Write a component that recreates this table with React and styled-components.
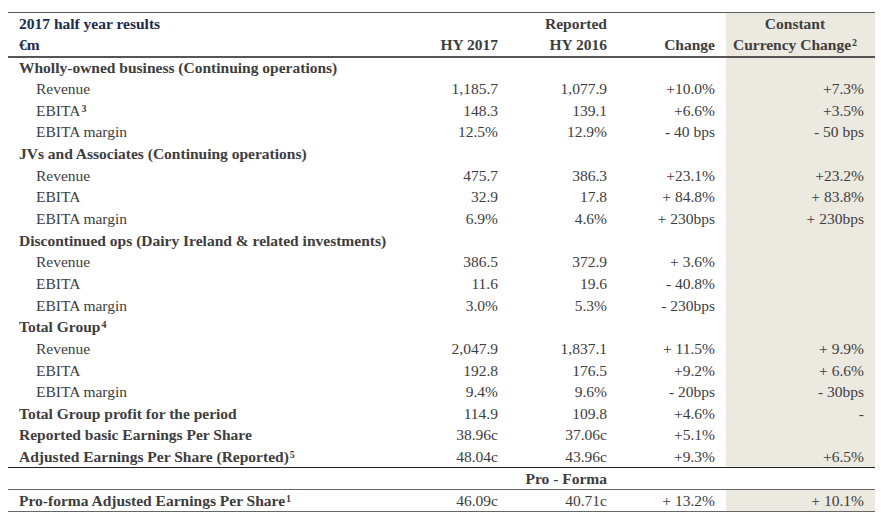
import React from 'react';
import styled, { createGlobalStyle } from 'styled-components';

const GlobalStyle = createGlobalStyle`
    html, body {
        margin: 0;
        padding: 0;
        background: #ffffff;
    }
`;

const Page = styled.div`
    width: 881px;
    height: 522px;
    padding: 12px 6px 0 8px;
    box-sizing: border-box;
    font-family: "Liberation Serif", "Times New Roman", serif;
    font-size: 15.5px;
    color: #3d3d3d;
`;

const Table = styled.table`
    width: 867px;
    border-collapse: collapse;
    table-layout: fixed;
`;

const Row = styled.tr`
    height: ${(p) => p.$h || 21.65}px;
    border-top: ${(p) => p.$top || 'none'};
    border-bottom: ${(p) => p.$bottom || 'none'};
`;

const Cell = styled.td`
    padding: 0 11px 0 ${(p) => (p.$indent ? 28 : p.$left ? 11 : 0)}px;
    text-align: ${(p) => (p.$align || 'right')};
    font-weight: ${(p) => (p.$bold ? 700 : 400)};
    white-space: nowrap;
    line-height: 1;
    vertical-align: middle;
    background: ${(p) => (p.$shade ? '#ece9e0' : 'transparent')};
    color: ${(p) => (p.$title ? '#1d2b4c' : 'inherit')};
`;

const Sup = styled.sup`
    font-size: 10px;
    font-weight: 700;
    vertical-align: 4px;
    line-height: 0;
    margin-left: 1px;
`;

const rows = [
    { label: 'Wholly-owned business (Continuing operations)', head: true },
    { label: 'Revenue', v: ['1,185.7', '1,077.9', '+10.0%', '+7.3%'] },
    { label: 'EBITA', sup: '3', v: ['148.3', '139.1', '+6.6%', '+3.5%'] },
    { label: 'EBITA margin', v: ['12.5%', '12.9%', '- 40 bps', '- 50 bps'] },
    { label: 'JVs and Associates (Continuing operations)', head: true },
    { label: 'Revenue', v: ['475.7', '386.3', '+23.1%', '+23.2%'] },
    { label: 'EBITA', v: ['32.9', '17.8', '+ 84.8%', '+ 83.8%'] },
    { label: 'EBITA margin', v: ['6.9%', '4.6%', '+ 230bps', '+ 230bps'] },
    { label: 'Discontinued ops (Dairy Ireland & related investments)', head: true },
    { label: 'Revenue', v: ['386.5', '372.9', '+ 3.6%', ''] },
    { label: 'EBITA', v: ['11.6', '19.6', '- 40.8%', ''] },
    { label: 'EBITA margin', v: ['3.0%', '5.3%', '- 230bps', ''] },
    { label: 'Total Group', sup: '4', head: true },
    { label: 'Revenue', v: ['2,047.9', '1,837.1', '+ 11.5%', '+ 9.9%'] },
    { label: 'EBITA', v: ['192.8', '176.5', '+9.2%', '+ 6.6%'] },
    { label: 'EBITA margin', v: ['9.4%', '9.6%', '- 20bps', '- 30bps'] },
    { label: 'Total Group profit for the period', total: true, v: ['114.9', '109.8', '+4.6%', '-'] },
    { label: 'Reported basic Earnings Per Share', total: true, v: ['38.96c', '37.06c', '+5.1%', ''] },
    { label: 'Adjusted Earnings Per Share (Reported)', sup: '5', total: true, v: ['48.04c', '43.96c', '+9.3%', '+6.5%'] },
];

const Label = ({ r }) => (
    <Cell $align="left" $left={!!(r.head || r.total)} $indent={!(r.head || r.total)} $bold={r.head || r.total}>
        {r.label}
        {r.sup && <Sup>{r.sup}</Sup>}
    </Cell>
);

const App = () => {
    return (
        <Page>
            <GlobalStyle />
            <Table>
                <colgroup>
                    <col style={{ width: 393 }} />
                    <col style={{ width: 108 }} />
                    <col style={{ width: 109 }} />
                    <col style={{ width: 108 }} />
                    <col style={{ width: 149 }} />
                </colgroup>
                <tbody>
                    <Row $h={22} $top="1.5px solid #5b5b5b">
                        <Cell $align="left" $left $bold $title>2017 half year results</Cell>
                        <Cell />
                        <Cell $bold>Reported</Cell>
                        <Cell />
                        <Cell $bold $shade $align="center">Constant</Cell>
                    </Row>
                    <Row $h={22} $bottom="2.5px solid #555">
                        <Cell $align="left" $left $bold $title>€m</Cell>
                        <Cell $bold>HY 2017</Cell>
                        <Cell $bold>HY 2016</Cell>
                        <Cell $bold>Change</Cell>
                        <Cell $bold $shade $align="center">
                            Currency Change<Sup>2</Sup>
                        </Cell>
                    </Row>
                    {rows.map((r, i) => (
                        <Row key={i} $bottom={i === rows.length - 1 ? '1.5px solid #222' : 'none'}>
                            <Label r={r} />
                            <Cell>{r.v ? r.v[0] : ''}</Cell>
                            <Cell>{r.v ? r.v[1] : ''}</Cell>
                            <Cell>{r.v ? r.v[2] : ''}</Cell>
                            <Cell $shade>{r.v ? r.v[3] : ''}</Cell>
                        </Row>
                    ))}
                    <Row $h={22} $bottom="1.5px solid #666">
                        <Cell />
                        <Cell />
                        <Cell $bold>Pro - Forma</Cell>
                        <Cell />
                        <Cell />
                    </Row>
                    <Row $h={21.5} $bottom="1.5px solid #666">
                        <Label r={{ label: 'Pro-forma Adjusted Earnings Per Share', sup: '1', total: true }} />
                        <Cell>46.09c</Cell>
                        <Cell>40.71c</Cell>
                        <Cell>+ 13.2%</Cell>
                        <Cell $shade>+ 10.1%</Cell>
                    </Row>
                </tbody>
            </Table>
        </Page>
    );
};

export default App;
